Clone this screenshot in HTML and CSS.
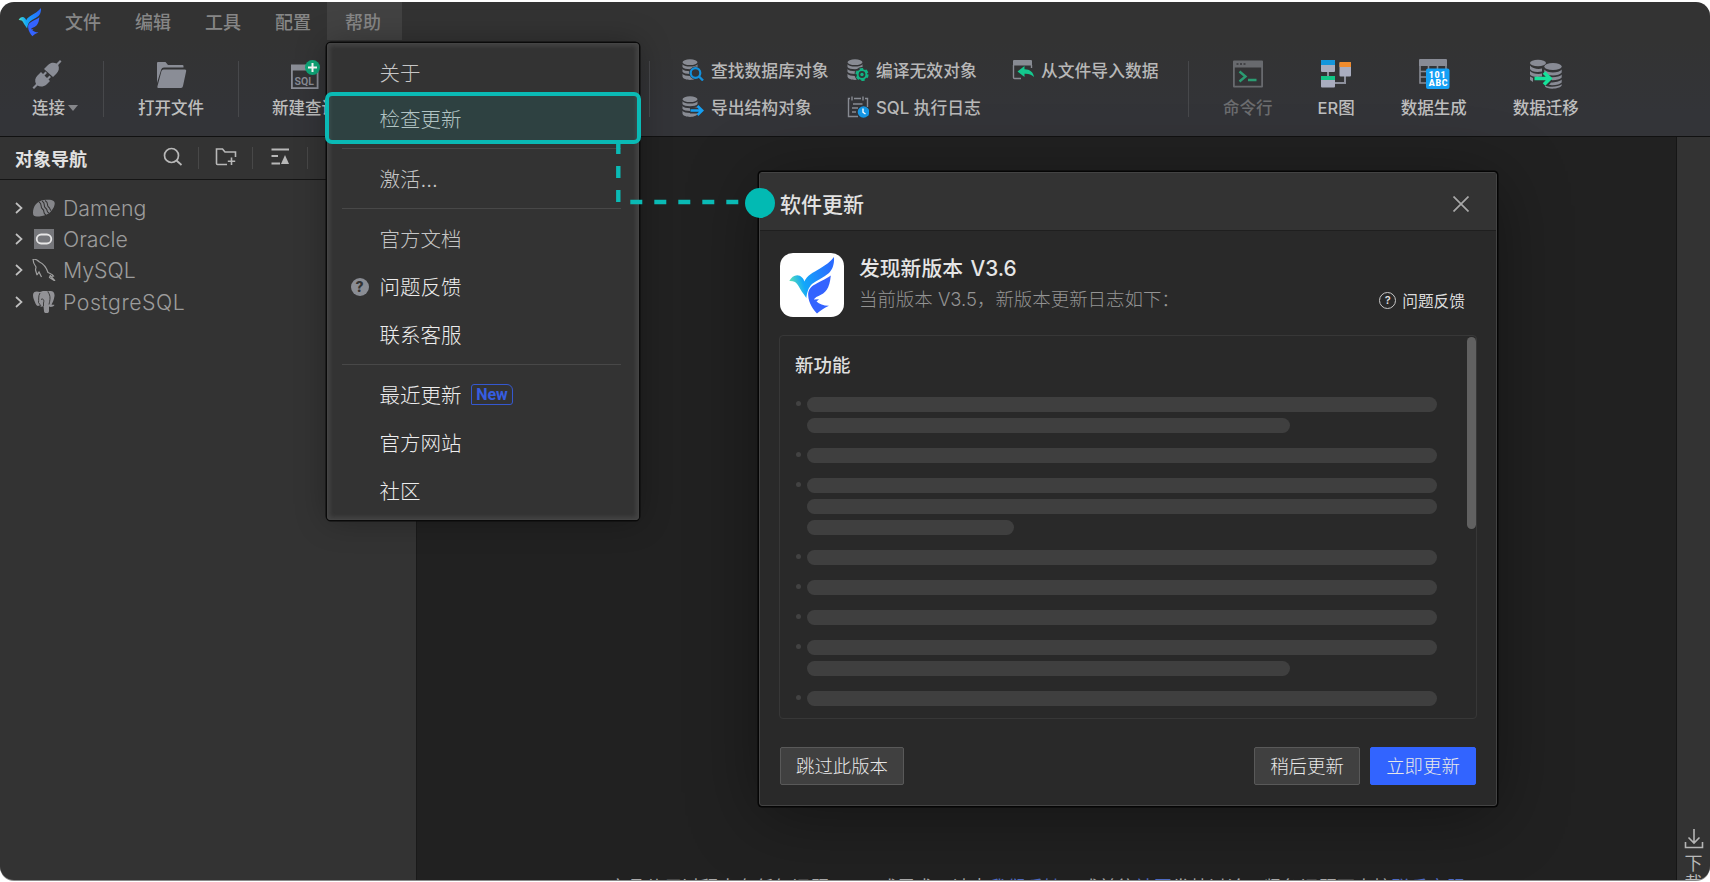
FILE: index.html
```html
<!DOCTYPE html>
<html lang="zh-CN">
<head>
    <meta charset="UTF-8">
    <meta name="viewport" content="width=device-width, initial-scale=1.0">
    <title>软件更新</title>
    <link rel="stylesheet" href="styles.css">
</head>
<body>
    <!-- Shared symbols -->
    <svg class="symbols" width="0" height="0">
        <defs>
            <linearGradient id="wing-top" gradientUnits="userSpaceOnUse" x1="9" y1="28" x2="52" y2="16">
                <stop offset="0" stop-color="#5fe3b0"/>
                <stop offset="0.3" stop-color="#12a8fa"/>
                <stop offset="1" stop-color="#2a6bff"/>
            </linearGradient>
            <symbol id="bird" viewBox="0 0 64 64">
                <path fill="url(#wing-top)" d="M9.300 28C12 22.500 18 20 22 24.500C23.500 26 24 27 24.300 28.500C27 22.500 33 19.500 40 15.500C46 12 50.500 8.500 54 4C54.500 12 52 17 49 20C44 24.500 37 27 32 31C28 35 27 40 26.300 45C23 40 20.500 37 18.500 33C16.500 29 13.500 27.800 9.300 28Z"/>
                <path fill="#3463ff" d="M50.800 22.500C49.500 36 45.500 40 38.500 43C35 44.500 34 46 34 46.500L39 46.300L36.500 48.500C39.500 51 43.500 52.800 49 52.700C44 55 40 57.500 37 60.500C33.500 57 28.500 50 28.200 42.500C28 31 39 31 50.800 22.500Z"/>
            </symbol>
            <symbol id="db" viewBox="0 0 22 22">
                <ellipse cx="8" cy="3.200" rx="7.500" ry="2.900"/>
                <path d="M.5 5.200C2 8.300 14 8.300 15.500 5.200V8C14 11 2 11 .5 8Z"/>
                <path d="M.5 10C2 13 14 13 15.500 10V12.800C14 15.800 2 15.800 .5 12.800Z"/>
                <path d="M.5 14.800C2 17.800 14 17.800 15.500 14.800V17.800C14 22 2 22 .5 17.800Z"/>
            </symbol>
        </defs>
    </svg>

    <div class="window">
        <nav class="menubar">
            <svg class="logo"><use href="#bird"/></svg>
            <span class="menu">文件</span>
            <span class="menu">编辑</span>
            <span class="menu">工具</span>
            <span class="menu">配置</span>
            <span class="menu open">帮助</span>
        </nav>

        <div class="toolbar">
            <div class="tool connect">
                <svg width="32" height="32" viewBox="0 0 32 32" fill="#8a8d96">
                    <path d="M13 10L17 6C20 3 23.500 3.500 25.500 4.500L29 1L30.500 2.500L27.200 6C28.500 9 28 12 25.500 14.500L22 18Z"/>
                    <path d="M10 13L12 15L14.500 12.500L16 14L13.500 16.500L16 19L18.500 16.500L20 18L17.500 20.500L19 22L15.500 25.500C12.500 28 9 28 6.500 26.500L3 30L1.500 28.500L5 25C3.500 22 4 19 6.500 16.500Z"/>
                </svg>
                <span>连接<i class="caret"></i></span>
            </div>
            <i class="divider"></i>
            <div class="tool open-file">
                <svg width="32" height="32" viewBox="0 0 32 32" fill="#8a8d96">
                    <path d="M2 24V4Q2 3 3 3H10.500L13 6H27.500Q28.500 6 28.500 7V8.500H9Q6.800 8.500 6.200 10.500Z"/>
                    <path d="M8.500 10.500H30Q31.500 10.500 31.200 12L28 27Q27.600 29 26 29H3.500Q2 29 2.400 27.500L6.500 12Q7 10.500 8.500 10.500Z"/>
                </svg>
                <span>打开文件</span>
            </div>
            <i class="divider"></i>
            <div class="tool new-query">
                <svg width="32" height="32" viewBox="0 0 32 32">
                    <path fill="#8a8d96" fill-rule="evenodd" d="M2 5.500H29.500V30H2ZM3.800 11.500V28.300H27.700V11.500Z"/>
                    <text class="sql-label" x="5.500" y="25.500">SQL</text>
                    <circle cx="23.500" cy="8.500" r="7.500" fill="#0fa678"/>
                    <path d="M23.500 4V13M19 8.500H28" stroke="#fff" stroke-width="2"/>
                </svg>
                <span>新建查询</span>
            </div>
            <i class="divider grid-start"></i>

            <div class="tool-grid">
                <div class="mini">
                    <svg width="22" height="22" viewBox="0 0 22 22"><use href="#db" fill="#888b93"/><circle cx="13.500" cy="14" r="6.500" fill="#333437"/><circle cx="13.500" cy="14" r="4.800" fill="none" stroke="#1490da" stroke-width="2.200"/><path d="M17 17.500L21 21.500" stroke="#1490da" stroke-width="2.400"/></svg>
                    查找数据库对象
                </div>
                <div class="mini">
                    <svg width="22" height="22" viewBox="0 0 22 22"><use href="#db" fill="#888b93"/><circle cx="15" cy="15.500" r="7.500" fill="#333437"/><circle cx="15" cy="15.500" r="5.500" fill="none" stroke="#12b483" stroke-width="2.200" stroke-dasharray="3.300 2.460"/><circle cx="15" cy="15.500" r="4.400" fill="none" stroke="#12b483" stroke-width="2"/><circle cx="15" cy="15.500" r="1.700" fill="#12b483"/></svg>
                    编译无效对象
                </div>
                <div class="mini">
                    <svg width="22" height="22" viewBox="0 0 22 22"><path d="M1.500 6V18.500Q1.500 19.500 2.500 19.500H9M19.500 6V9" fill="none" stroke="#888b93" stroke-width="1.400"/><path fill="#888b93" d="M1 2Q1 1 2 1H19Q20 1 20 2V6.500H1Z"/><path fill="#14c98e" d="M5.500 12.500L12.500 7V10.200C18 10.200 21.500 13.500 22 18C19 15 16.500 14.500 12.500 14.700V18Z"/></svg>
                    从文件导入数据
                </div>
                <div class="mini">
                    <svg width="22" height="22" viewBox="0 0 22 22"><use href="#db" fill="#888b93"/><path d="M8 14.500H17" stroke="#333437" stroke-width="6"/><path d="M8.500 14.500H19.500M15.500 10L20.200 14.500L15.500 19" fill="none" stroke="#159ff2" stroke-width="2.500"/></svg>
                    导出结构对象
                </div>
                <div class="mini">
                    <svg width="22" height="22" viewBox="0 0 22 22"><path d="M3 2.500H1.500V20.500H11M7 2.500H14M18 2.500H20.500V11M5 .5V4.500M16 .5V4.500" fill="none" stroke="#888b93" stroke-width="1.400"/><path d="M6 8H15.500M5 12H11M5 16H9" stroke="#888b93" stroke-width="1.300"/><circle cx="16.500" cy="16" r="5.800" fill="#1597e5"/><path d="M16 12.500V16.200L18.500 18" fill="none" stroke="#fff" stroke-width="1.400"/></svg>
                    SQL 执行日志
                </div>
            </div>

            <i class="divider"></i>
            <div class="tool command disabled">
                <svg width="32" height="32" viewBox="0 0 32 32"><path fill="#686a6e" fill-rule="evenodd" d="M1 3.500Q1 2.500 2 2.500H30Q31 2.500 31 3.500V28.500Q31 29.500 30 29.500H2Q1 29.500 1 28.500ZM2.800 9.500V27.700H29.200V9.500Z"/><path d="M4.500 6H6.500M8 6H10M11.500 6H13.500" stroke="#35363a" stroke-width="1.600"/><path d="M7.500 13.500L13.500 18.500L7.500 23.500M16 22H24.500" fill="none" stroke="#2b9c72" stroke-width="2.400"/></svg>
                <span>命令行</span>
            </div>
            <div class="tool er">
                <svg width="32" height="32" viewBox="0 0 32 32"><path d="M8 13V19M15 25H25V17" fill="none" stroke="#8d909c" stroke-width="2"/><rect x="1" y="2" width="14" height="12" rx="1" fill="#a9adbf"/><path fill="#1496dc" d="M1 3Q1 2 2 2H14Q15 2 15 3V7H1Z"/><rect x="19.500" y="4" width="11.500" height="14.500" rx="1" fill="#a9adbf"/><path fill="#f08b2c" d="M19.500 5Q19.500 4 20.500 4H30Q31 4 31 5V9H19.500Z"/><rect x="1" y="18" width="14" height="11.500" rx="1" fill="#a9adbf"/><path fill="#12c586" d="M1 18H15V22H1Z"/></svg>
                <span>ER图</span>
            </div>
            <div class="tool generate">
                <svg width="32" height="32" viewBox="0 0 32 32"><path fill="#888b95" d="M1 2Q1 1 2 1H28Q29 1 29 2V8H1Z"/><path d="M2 8V25H8M2 13.500H28V8M2 19H8M10.500 8V13M19.500 8V13" fill="none" stroke="#888b95" stroke-width="1.600"/><rect x="8" y="10.500" width="23.500" height="20.500" rx="2" fill="#14a0f5"/><text class="gen-label" x="10.800" y="19.800">101</text><text class="gen-label" x="10.800" y="28.300">ABC</text></svg>
                <span>数据生成</span>
            </div>
            <div class="tool migrate">
                <svg width="34" height="32" viewBox="0 0 34 32" fill="#888b95"><ellipse cx="9" cy="5" rx="8" ry="3.300"/><path d="M1 7.500C3 10.500 9 11.500 13 10.500V13.500C7 14.500 2 13.500 1 11ZM1 13C3 15.500 9 16.500 13 15.500V18.500C7 19.500 2 18.500 1 16.500ZM1 18.500L4 20V24L1 22Z"/><ellipse cx="24" cy="8.500" rx="8.700" ry="3.600"/><path d="M15.300 11.500C18 15.500 30 15.500 32.700 11.500V14.500C30 18.500 18 18.500 15.300 14.500ZM20 19C25 19.800 31 18.800 32.700 16.500V19.500C31 21.500 27 22.300 23 22.200ZM22 24.500C26 24.500 31 23.500 32.700 21.500V24.500C31 26.500 26 27.500 20 27ZM16 27.500C20 29.500 30 29 32.700 26.300V27.500C30 31.500 18 31.500 16 28.500Z"/><path d="M5.500 20.500H20M15 14.500L21 20.500L15 26.500" fill="none" stroke="#15e29a" stroke-width="3.600"/></svg>
                <span>数据迁移</span>
            </div>
        </div>

        <div class="workspace">
            <aside class="sidebar">
                <div class="side-head">
                    <b>对象导航</b>
                    <svg width="20" height="20" viewBox="0 0 20 20"><circle cx="8.500" cy="8.500" r="7" fill="none" stroke="#b8b8b8" stroke-width="1.700"/><path d="M13.500 13.500L18.500 18" stroke="#b8b8b8" stroke-width="1.800"/></svg>
                    <i class="bar"></i>
                    <svg width="22" height="20" viewBox="0 0 22 20" fill="none" stroke="#b8b8b8" stroke-width="1.600"><path d="M12 17.500H2.500Q1.500 17.500 1.500 16.500V2H7.500L10 5H20.500V10M16.500 10.500V18M12.800 14.200H20.200"/></svg>
                    <i class="bar"></i>
                    <svg class="sort" width="20" height="20" viewBox="0 0 20 20"><path d="M1.500 2.500H19M1.500 9H8M1.500 16.500H10" stroke="#b8b8b8" stroke-width="1.800"/><path fill="#b8b8b8" d="M15 8L19 17H11Z"/></svg>
                    <i class="bar"></i>
                </div>
                <ul class="tree">
                    <li>
                        <svg class="chevron" viewBox="0 0 8 12"><path d="M1 1L6.500 6L1 11"/></svg>
                        <svg class="brand" viewBox="0 0 24 22"><path fill="#85868a" d="M1 16C1 9 5 4 12 3C19 2 24 3 22.500 8C21 14 16 18 10 19C4 20 1 20 1 16Z"/><path d="M7 5C11 7 7.500 10 10.500 12S10 16 14 18M10 4C14.500 6.500 10.500 9 13.500 11S13.500 14.500 17 16M13 3.500C17.500 6 14 8 16.500 10S17 12 19 13.500" fill="none" stroke="#333" stroke-width="1.100"/></svg>
                        Dameng
                    </li>
                    <li>
                        <svg class="chevron" viewBox="0 0 8 12"><path d="M1 1L6.500 6L1 11"/></svg>
                        <svg class="brand" viewBox="0 0 24 22"><rect x="2" y="1" width="20" height="20" fill="#76777b"/><rect x="4.700" y="6.500" width="14.600" height="9" rx="4.500" fill="none" stroke="#e6e6e6" stroke-width="1.800"/></svg>
                        Oracle
                    </li>
                    <li>
                        <svg class="chevron" viewBox="0 0 8 12"><path d="M1 1L6.500 6L1 11"/></svg>
                        <svg class="brand" viewBox="0 0 24 22" fill="none" stroke="#a0a0a0" stroke-width="1.200"><path d="M5 16L3.500 11L4 8C2 5.500 1 2 1 0C4 0 6 1.500 7.500 3C12 5 14.500 9 16 13.500C18 14.500 20.500 15 21.500 17L19 17.500L23 22M5 16L7 13L9.500 18M18.500 16L17.500 18.500L23 22"/></svg>
                        MySQL
                    </li>
                    <li>
                        <svg class="chevron" viewBox="0 0 8 12"><path d="M1 1L6.500 6L1 11"/></svg>
                        <svg class="brand" viewBox="0 0 24 22"><path fill="#929296" d="M1 4C1 0 5 0 8 1C11 -.5 14 -.5 16 .5C20 -1 23 1 22.500 5C22 9 20.500 12 19.500 13.500C21 14 22 13.500 22.500 14C21 16.500 18 16 17 15.500V20C17 23 12 23 12 20L11.500 15C9 16.500 7.500 15 7.500 14C6 16 4.500 14.500 3.500 12.500C2 9 1 7 1 4Z"/><path d="M8 2C6 5 7 9 6.500 11.500L9 15M16 1C19 5 18 9 17 13.500M9 8.500C11 7 12.500 9 11.500 12V15" fill="none" stroke="#333" stroke-width=".9"/></svg>
                        <span class="wide">PostgreSQL</span>
                    </li>
                </ul>
            </aside>
            <main class="editor">
                <p class="tips">产品使用过程中有任何问题 BUG 或需求，请点<a>我们反馈</a>，或前往<a>社区</a>发帖讨论，紧急问题可直接<a>联系客服</a></p>
            </main>
            <div class="rail">
                <svg width="20" height="20" viewBox="0 0 20 20" fill="none" stroke="#b5b5b5" stroke-width="1.600"><path d="M10 0V14M4.500 8.500L10 14L15.500 8.500M1.500 13V18.500H18.500V13"/></svg>
                <span>下</span>
                <span>载</span>
            </div>
        </div>

        <!-- Help menu -->
        <div class="dropdown">
            <div class="entry first">关于</div>
            <div class="entry">检查更新</div>
            <hr>
            <div class="entry">激活...</div>
            <hr>
            <div class="entry">官方文档</div>
            <div class="entry bright"><i class="help">?</i>问题反馈</div>
            <div class="entry bright">联系客服</div>
            <hr>
            <div class="entry bright">最近更新<em>New</em></div>
            <div class="entry bright">官方网站</div>
            <div class="entry bright">社区</div>
        </div>

        <!-- Update dialog -->
        <section class="dialog">
            <header>
                <h2>软件更新</h2>
                <svg width="16" height="16" viewBox="0 0 16 16"><path d="M.5 .5L15.500 15.500M15.500 .5L.5 15.500" stroke="#a8a8a8" stroke-width="1.700"/></svg>
            </header>
            <div class="about">
                <div class="app-icon"><svg width="64" height="64"><use href="#bird"/></svg></div>
                <div class="version">
                    <h3>发现新版本 V3.6</h3>
                    <p>当前版本 V3.5，新版本更新日志如下：</p>
                </div>
                <div class="feedback"><i>?</i>问题反馈</div>
            </div>
            <div class="log">
                <h4>新功能</h4>
                <ul>
                    <li><i></i><i class="mid"></i></li>
                    <li><i></i></li>
                    <li><i></i><i></i><i class="short"></i></li>
                    <li><i></i></li>
                    <li><i></i></li>
                    <li><i></i></li>
                    <li><i></i><i class="mid"></i></li>
                    <li><i></i></li>
                </ul>
                <div class="scrollbar"></div>
            </div>
            <footer>
                <button>跳过此版本</button>
                <button class="later">稍后更新</button>
                <button class="primary">立即更新</button>
            </footer>
        </section>

        <!-- Callout from the menu entry to the dialog -->
        <div class="highlight"></div>
        <svg class="callout" width="170" height="80" viewBox="0 0 170 80">
            <path d="M8.300 0V60H150" fill="none" stroke="#0abab5" stroke-width="4.400" stroke-dasharray="12 12"/>
            <circle cx="150" cy="61" r="15" fill="#02bab3"/>
        </svg>
    </div>
</body>
</html>
```
FILE: styles.css
```css
* {
    box-sizing: border-box;
}
body {
    margin: 0;
    padding: 2px 0 0;
    height: 882px;
    overflow: hidden;
    background-color: #fff;
    font-family: Inter, "Noto Sans CJK SC", sans-serif;
    color: #b8b8b8;
}
h2, h3, h4, p, ul {
    margin: 0;
    padding: 0;
}
i, em {
    font-style: normal;
}
svg {
    display: block;
    flex: none;
}
.symbols {
    position: absolute;
}
.window {
    position: relative;
    display: flex;
    flex-direction: column;
    height: 878px;
    border-radius: 14px;
    overflow: hidden;
    background-color: #333;
    box-shadow: 0 1px 0 #8a8a8a;
}

/* Menu bar */
.menubar {
    display: flex;
    height: 38px;
    flex: none;
}
.logo {
    width: 32px;
    height: 32px;
    margin: 4px 1px 0 14px;
}
.menu {
    width: 70px;
    padding-left: 18px;
    font-size: 18px;
    font-weight: 500;
    line-height: 41px;
    color: #868686;
}
.menu.open {
    width: 75px;
    background-color: #424242;
}

/* Toolbar */
.toolbar {
    display: flex;
    height: 97px;
    flex: none;
    padding-top: 20px;
    background: linear-gradient(#333, #333438 75%);
    border-bottom: 1px solid #111;
}
.tool {
    display: flex;
    flex-direction: column;
    align-items: center;
    flex: none;
    font-size: 16.500px;
    font-weight: 500;
    line-height: 24px;
    color: #bebebe;
    white-space: nowrap;
}
.tool svg {
    margin-top: -1px;
}
.tool span {
    margin-top: 5px;
}
.tool.disabled {
    color: #6c6d6f;
}
.connect {
    width: 103px;
}
.connect svg {
    margin-left: -9px;
}
.connect span {
    margin-left: 7px;
}
.caret {
    display: inline-block;
    margin: 0 0 3px 3px;
    border: 5.500px solid transparent;
    border-top: 6px solid #85868a;
    border-bottom: 0;
}
.divider {
    width: 1px;
    height: 56px;
    margin-top: 1px;
    background-color: #47484b;
    flex: none;
}
.open-file {
    width: 134px;
}
.new-query {
    width: 132px;
}
.grid-start {
    margin-left: 278px;
}
.sql-label {
    font: 600 10.500px Roboto, sans-serif;
    fill: #8a8d96;
}
.gen-label {
    font: 900 8.800px Roboto, sans-serif;
    letter-spacing: .7px;
    fill: #fff;
}
.tool-grid {
    display: grid;
    grid-template-columns: 165px 165px 176px;
    grid-template-rows: 37px 37px;
    width: 506px;
    margin-left: 32px;
    margin-top: -9px;
}
.mini {
    display: flex;
    align-items: center;
    gap: 7px;
    font-size: 16.800px;
    font-weight: 500;
    color: #b8b8b8;
    white-space: nowrap;
}
.tool.command {
    margin-left: 34px;
}
.tool.er {
    margin-left: 45px;
}
.tool.generate {
    margin-left: 46px;
}
.tool.migrate {
    margin-left: 46px;
}
.command svg, .er svg, .generate svg, .migrate svg {
    margin-top: -2px;
}
.command span, .er span, .generate span, .migrate span {
    margin-top: 6px;
}

/* Workspace */
.workspace {
    display: flex;
    flex: 1;
    min-height: 0;
}
.sidebar {
    width: 416px;
    flex: none;
}
.side-head {
    display: flex;
    align-items: center;
    height: 43px;
    padding-left: 15px;
    border-bottom: 1px solid #151515;
}
.side-head b {
    width: 148px;
    font-size: 18px;
    color: #e2e2e2;
}
.side-head svg {
    margin-top: -2px;
}
.side-head .bar {
    width: 1px;
    height: 22px;
    margin: 0 16px 0 15px;
    background-color: #484848;
}
.side-head .sort {
    margin-left: 1px;
    margin-right: 2px;
}
.tree {
    padding: 12px 0 0 15px;
    list-style: none;
}
.tree li {
    display: flex;
    align-items: center;
    height: 31.400px;
    font-size: 21.300px;
    font-weight: 300;
    color: #9c9c9c;
}
.tree .wide {
    letter-spacing: .5px;
}
.chevron {
    width: 8px;
    height: 12px;
    margin-right: 9px;
    fill: none;
    stroke: #c0c0c0;
    stroke-width: 1.700;
}
.brand {
    width: 24px;
    height: 22px;
    margin-right: 7px;
}
.editor {
    display: flex;
    flex-direction: column;
    justify-content: flex-end;
    flex: 1;
    background-color: #212121;
    border-left: 1px solid #1a1a1a;
}
.tips {
    height: 5px;
    padding-left: 192px;
    font-size: 18px;
    line-height: 25px;
    letter-spacing: .31px;
    white-space: nowrap;
    overflow: hidden;
    color: #aaa;
}
.tips a {
    color: #4d6bc4;
}
.rail {
    display: flex;
    flex-direction: column;
    align-items: center;
    width: 34px;
    padding-top: 692px;
    font-size: 18px;
    line-height: 20px;
    border-left: 1px solid #161616;
    overflow: hidden;
}
.rail svg {
    margin-bottom: 5px;
}

/* Help menu */
.dropdown {
    position: absolute;
    left: 327px;
    top: 41px;
    width: 312px;
    height: 477px;
    padding-top: 8px;
    border-radius: 4px;
    background-color: #333;
    box-shadow: 0 0 0 1.500px #0a0a0a, inset 0 0 4px 3px #444, inset 0 0 0 1px #4a4a4a, 0 0 32px rgba(0, 0, 0, .3);
}
.entry {
    position: relative;
    display: flex;
    align-items: center;
    height: 48px;
    padding: 0 0 2px 52.500px;
    font-size: 20.500px;
    font-weight: 300;
    color: #c6c6c6;
}
.entry.first {
    height: 44px;
}
.entry.bright {
    color: #eee;
}
.dropdown hr {
    height: 1px;
    margin: 5px 18px 6px 15px;
    border: 0;
    background-color: #484848;
}
.help {
    width: 18px;
    height: 18px;
    margin: 1px 11px 0 -29px;
    border-radius: 50%;
    background-color: #8a8d94;
    color: #333;
    font-size: 14px;
    font-weight: 800;
    line-height: 18px;
    text-align: center;
}
.entry em {
    width: 42px;
    height: 21px;
    margin-left: 9.500px;
    border: 1.500px solid #3558cf;
    border-radius: 3px 6px 3px 1px;
    color: #365de0;
    font: 700 16px/19px Roboto, sans-serif;
    text-align: center;
}

/* Callout */
.highlight {
    position: absolute;
    left: 325px;
    top: 90px;
    width: 316px;
    height: 52px;
    border: 4px solid #0abab5;
    border-radius: 7px;
    background-color: rgba(10, 186, 181, .11);
}
.callout {
    position: absolute;
    left: 610px;
    top: 140px;
}

/* Update dialog */
.dialog {
    position: absolute;
    left: 759px;
    top: 170px;
    width: 738px;
    height: 634px;
    border: 1px solid #434343;
    border-radius: 3px;
    background-color: #292929;
    box-shadow: 0 0 0 1.500px #050505, 0 10px 70px rgba(0, 0, 0, .4);
}
.dialog header {
    display: flex;
    align-items: center;
    justify-content: space-between;
    height: 58px;
    padding: 2px 27px 0 20px;
    background-color: #333;
    border-bottom: 1px solid #1f1f1f;
}
.dialog header svg {
    margin-top: 3px;
}
.dialog h2 {
    font-size: 21px;
    font-weight: 500;
    color: #e2e2e2;
}
.about {
    display: flex;
    height: 104px;
    padding: 22px 31px 0 20px;
}
.app-icon {
    width: 64px;
    height: 64px;
    border-radius: 13px;
    background-color: #fff;
}
.version {
    flex: 1;
    margin-left: 15px;
}
.version h3 {
    font-size: 20.800px;
    font-weight: 500;
    line-height: 32px;
    word-spacing: 2px;
    color: #e6e6e6;
}
.version p {
    font-size: 18.450px;
    font-weight: 300;
    line-height: 29px;
    color: #949494;
}
.feedback {
    display: flex;
    align-items: center;
    height: 24px;
    margin-top: 35px;
    font-size: 15.700px;
    color: #dcdcdc;
}
.feedback i {
    width: 17px;
    height: 17px;
    margin-right: 6px;
    border: 1.400px solid #c8c8c8;
    border-radius: 50%;
    font-size: 11px;
    font-weight: 600;
    line-height: 15px;
    text-align: center;
}
.log {
    position: relative;
    height: 384px;
    margin: 0 19px 0 19px;
    padding: 13px 38px 0 15px;
    border: 1px solid #373737;
    border-radius: 4px;
}
.log h4 {
    font-size: 18.500px;
    font-weight: 500;
    line-height: 32px;
    color: #dedede;
}
.log ul {
    margin: 16px 0 0 1px;
    list-style: none;
}
.log li {
    position: relative;
    display: flex;
    flex-direction: column;
    gap: 6px;
    margin-bottom: 15px;
    padding-left: 11px;
}
.log li::before {
    content: "";
    position: absolute;
    left: 0;
    top: 4px;
    width: 5px;
    height: 5px;
    border-radius: 50%;
    background-color: #424242;
}
.log li i {
    width: 630px;
    height: 15px;
    border-radius: 8px;
    background-color: #3f3f3f;
}
.log li .mid {
    width: 483px;
}
.log li .short {
    width: 207px;
}
.scrollbar {
    position: absolute;
    top: 1px;
    right: 0;
    width: 9px;
    height: 192px;
    border-radius: 5px;
    background-color: #616161;
}
.dialog footer {
    display: flex;
    gap: 10px;
    padding: 28px 20px 0;
}
button {
    width: 106px;
    height: 38px;
    padding: 0;
    border: 1px solid #595959;
    border-radius: 2px;
    background-color: #404040;
    color: #e8e8e8;
    font-family: inherit;
    font-size: 18.400px;
    font-weight: 300;
    line-height: 34px;
}
button:first-child {
    width: 124px;
}
.later {
    margin-left: auto;
}
.primary {
    border-color: #3264ff;
    background-color: #3264ff;
}
```
